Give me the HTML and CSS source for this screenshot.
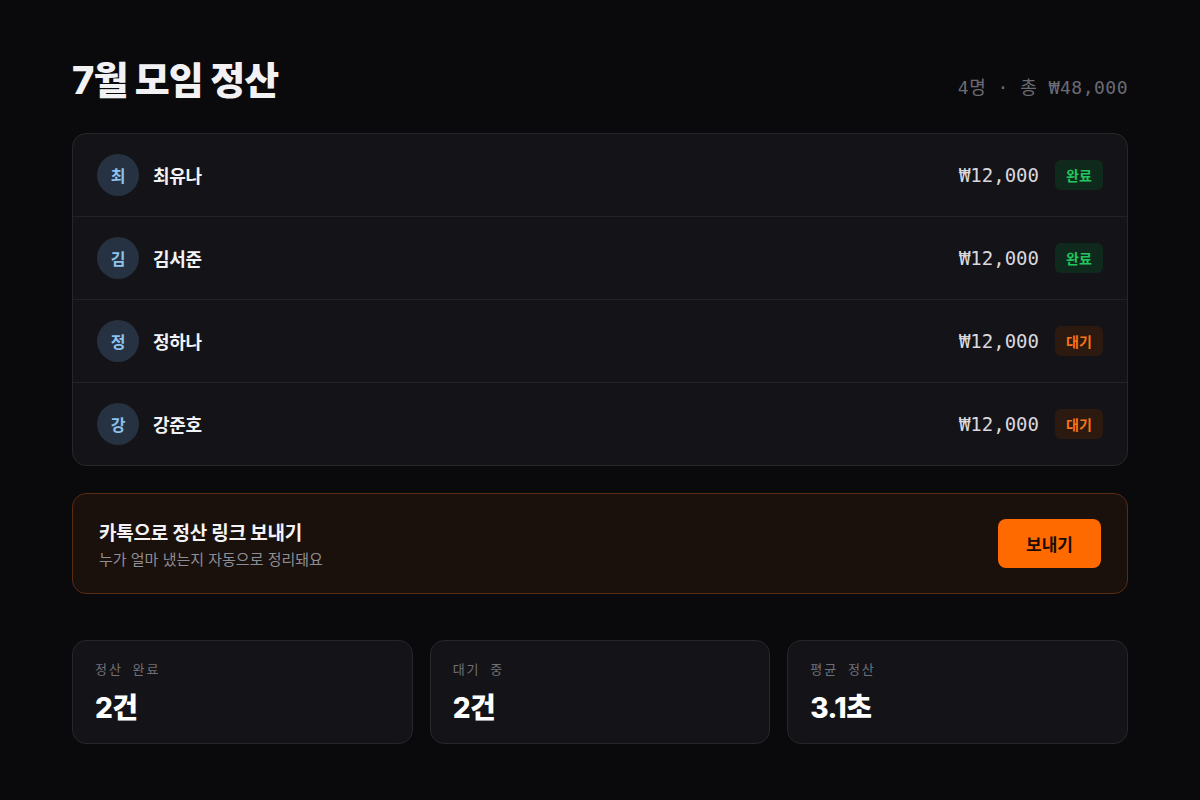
FILE: index.html
```html
<!DOCTYPE html>
<html lang="ko">
<head>
  <meta charset="UTF-8">
  <title>7월 모임 정산</title>
  <link rel="stylesheet" href="styles.css">
</head>
<body>
  <div class="page">
    <header class="head">
      <h1>7월 모임 정산</h1>
      <div class="meta">4명 · 총 ₩48,000</div>
    </header>

    <div class="list">
      <div class="row">
        <div class="avatar">최</div>
        <div class="name">최유나</div>
        <div class="amount">₩12,000</div>
        <span class="badge done">완료</span>
      </div>
      <div class="row">
        <div class="avatar">김</div>
        <div class="name">김서준</div>
        <div class="amount">₩12,000</div>
        <span class="badge done">완료</span>
      </div>
      <div class="row">
        <div class="avatar">정</div>
        <div class="name">정하나</div>
        <div class="amount">₩12,000</div>
        <span class="badge wait">대기</span>
      </div>
      <div class="row">
        <div class="avatar">강</div>
        <div class="name">강준호</div>
        <div class="amount">₩12,000</div>
        <span class="badge wait">대기</span>
      </div>
    </div>

    <div class="cta">
      <div>
        <div class="cta-title">카톡으로 정산 링크 보내기</div>
        <div class="cta-sub">누가 얼마 냈는지 자동으로 정리돼요</div>
      </div>
      <button class="send">보내기</button>
    </div>

    <div class="stats">
      <div class="stat">
        <div class="stat-label">정산 완료</div>
        <div class="stat-value">2건</div>
      </div>
      <div class="stat">
        <div class="stat-label">대기 중</div>
        <div class="stat-value">2건</div>
      </div>
      <div class="stat">
        <div class="stat-label">평균 정산</div>
        <div class="stat-value">3.1초</div>
      </div>
    </div>
  </div>
</body>
</html>
```

FILE: styles.css
```css
body {
  margin: 0;
  background: #0a0a0c;
  color: #f2f2f4;
  font-family: Inter, "Noto Sans CJK KR", sans-serif;
}
.page {
  padding: 56px 72px;
}
.head {
  display: flex;
  justify-content: space-between;
  align-items: baseline;
  margin-bottom: 29px;
}
h1 {
  margin: 0;
  font-size: 38px;
  font-weight: 800;
  letter-spacing: -0.025em;
  line-height: 48px;
}
.meta {
  font-family: "DejaVu Sans Mono", "Noto Sans CJK KR", monospace;
  font-size: 18px;
  letter-spacing: 0.5px;
  color: #6b6b73;
}
.list {
  background: #141418;
  border: 1px solid #26262c;
  border-radius: 14px;
}
.row {
  display: flex;
  align-items: center;
  height: 82px;
  padding: 0 24px;
  border-bottom: 1px solid #222228;
}
.row:last-child { border-bottom: none; }
.avatar {
  width: 42px;
  height: 42px;
  border-radius: 50%;
  background: #263241;
  color: #8ec2ee;
  font-size: 16px;
  font-weight: 700;
  display: flex;
  align-items: center;
  justify-content: center;
  margin-right: 14px;
}
.name {
  flex: 1;
  font-size: 18px;
  font-weight: 700;
  letter-spacing: -0.02em;
  color: #f2f2f4;
}
.amount {
  font-family: "DejaVu Sans Mono", "Noto Sans CJK KR", monospace;
  font-size: 19px;
  color: #d8d8de;
  margin-right: 16px;
}
.badge {
  display: inline-flex;
  align-items: center;
  justify-content: center;
  width: 48px;
  height: 30px;
  border-radius: 6px;
  font-size: 14px;
  font-weight: 700;
}
.done { background: #0f2a1d; color: #22c55e; }
.wait { background: #2c1a10; color: #f97316; }
.cta {
  margin-top: 27px;
  display: flex;
  justify-content: space-between;
  align-items: center;
  padding: 0 26px;
  height: 99px;
  background: #1a100c;
  border: 1px solid #5a2c12;
  border-radius: 14px;
}
.cta-title {
  font-size: 19px;
  font-weight: 700;
  letter-spacing: -0.01em;
  color: #f4f4f6;
  margin-bottom: 3px;
}
.cta-sub {
  font-size: 15px;
  color: #8e8e96;
}
.send {
  width: 103px;
  height: 49px;
  border: none;
  border-radius: 8px;
  background: #ff6a00;
  color: #1a0a02;
  font-family: inherit;
  font-size: 17px;
  font-weight: 700;
  cursor: pointer;
}
.stats {
  margin-top: 46px;
  display: grid;
  grid-template-columns: repeat(3, 1fr);
  gap: 17px;
}
.stat {
  background: #141418;
  border: 1px solid #26262c;
  border-radius: 14px;
  height: 104px;
  padding: 18px 22px 0;
  box-sizing: border-box;
}
.stat-label {
  font-family: "DejaVu Sans Mono", "Noto Sans CJK KR", monospace;
  font-size: 13px;
  letter-spacing: 0.15em;
  color: #707078;
  margin-bottom: 8px;
}
.stat-value {
  font-size: 28px;
  font-weight: 800;
  letter-spacing: -0.02em;
  color: #ffffff;
}
```
